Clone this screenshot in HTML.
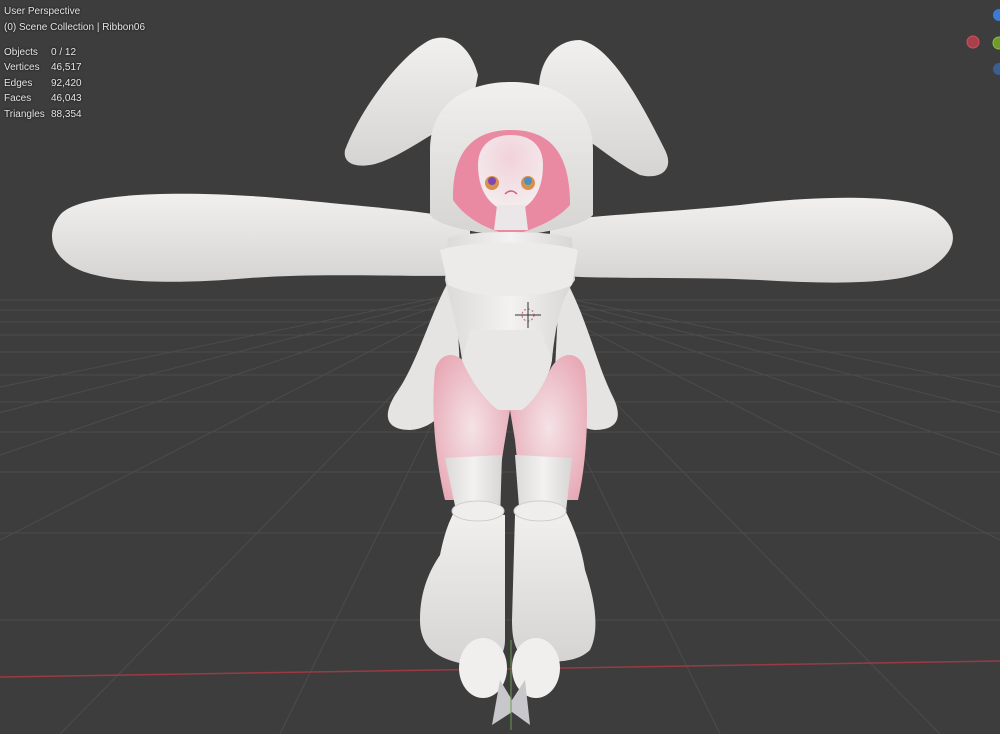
<!DOCTYPE html>
<html><head><meta charset="utf-8"><style>
html,body{margin:0;padding:0;background:#3d3d3d;width:1000px;height:734px;overflow:hidden}
.t{position:absolute;left:4px;color:#e6e6e6;font:10px "Liberation Sans",sans-serif;white-space:pre;text-shadow:0 0 2px #000}
</style></head><body>
<svg width="1000" height="734" style="position:absolute;left:0;top:0">
<defs>
<linearGradient id="w" x1="0" y1="0" x2="0" y2="1"><stop offset="0" stop-color="#f1f0ee"/><stop offset="1" stop-color="#d6d4d2"/></linearGradient>
<linearGradient id="wh" x1="0" y1="0" x2="1" y2="0"><stop offset="0" stop-color="#dcdad8"/><stop offset=".5" stop-color="#f3f2f1"/><stop offset="1" stop-color="#d8d6d4"/></linearGradient>
<radialGradient id="pk" cx=".5" cy=".5" r=".6"><stop offset="0" stop-color="#f4e3e6"/><stop offset="1" stop-color="#e8a9b6"/></radialGradient>
<radialGradient id="fc" cx=".5" cy=".3" r=".7"><stop offset="0" stop-color="#f2d2da"/><stop offset="1" stop-color="#f3eef0"/></radialGradient>
</defs>
<rect width="1000" height="734" fill="#3d3d3d"/>
<g stroke="#4c4c4c" stroke-width="1">
<line x1="0" y1="300" x2="1000" y2="300"/><line x1="0" y1="310" x2="1000" y2="310"/>
<line x1="0" y1="322" x2="1000" y2="322"/><line x1="0" y1="335" x2="1000" y2="335"/>
<line x1="0" y1="352" x2="1000" y2="352"/><line x1="0" y1="375" x2="1000" y2="375"/>
<line x1="0" y1="402" x2="1000" y2="402"/><line x1="0" y1="432" x2="1000" y2="432"/>
<line x1="0" y1="472" x2="1000" y2="472"/><line x1="0" y1="533" x2="1000" y2="533"/>
<line x1="0" y1="620" x2="1000" y2="620"/>
<line x1="500" y1="285" x2="-1260" y2="734"/><line x1="500" y1="285" x2="-820" y2="734"/>
<line x1="500" y1="285" x2="-380" y2="734"/><line x1="500" y1="285" x2="60" y2="734"/>
<line x1="500" y1="285" x2="280" y2="734"/><line x1="500" y1="285" x2="720" y2="734"/>
<line x1="500" y1="285" x2="940" y2="734"/><line x1="500" y1="285" x2="1380" y2="734"/>
<line x1="500" y1="285" x2="1820" y2="734"/><line x1="500" y1="285" x2="2260" y2="734"/>
<line x1="500" y1="285" x2="-1700" y2="734"/><line x1="500" y1="285" x2="2700" y2="734"/>
</g>
<line x1="0" y1="677" x2="1000" y2="661" stroke="#9a3a44" stroke-width="1.5"/>
<path d="M345 150 C360 110 400 55 430 40 C450 32 470 45 478 75 L470 115 C440 125 400 160 370 165 C350 168 343 160 345 150Z" fill="url(#w)"/>
<path d="M540 100 C535 70 550 40 580 40 C610 45 640 100 665 150 C675 170 660 180 640 175 C610 160 580 130 550 118 Z" fill="url(#w)"/>
<path d="M60 215 C80 190 200 190 300 200 C380 208 440 212 470 222 L470 275 C420 278 330 272 250 278 C180 284 100 285 70 265 C48 250 48 230 60 215 Z" fill="url(#w)"/>
<path d="M940 215 C920 193 820 195 740 205 C660 213 590 215 550 222 L550 275 C600 280 680 276 760 280 C830 284 910 286 935 265 C958 248 958 230 940 215 Z" fill="url(#w)"/>
<path d="M455 270 C430 310 420 360 395 395 C380 420 390 430 410 430 C440 428 455 400 460 370 Z" fill="#e6e4e2"/>
<path d="M560 270 C585 310 595 360 612 395 C625 420 615 430 595 430 C570 428 560 400 555 370 Z" fill="#e6e4e2"/>
<path d="M430 150 C430 105 465 82 511 82 C557 82 593 105 593 150 L593 215 C580 228 540 232 510 238 C480 232 440 228 430 215 Z" fill="url(#w)"/>
<path d="M453 200 C452 155 470 130 511 130 C552 130 570 155 570 205 C555 222 530 230 511 236 C492 230 468 222 453 200 Z" fill="#e98aa2"/>
<path d="M478 165 C478 145 492 135 511 135 C530 135 543 145 543 165 C543 195 528 210 511 212 C494 210 478 195 478 165 Z" fill="url(#fc)"/>
<path d="M497 205 L525 205 L528 230 L494 230 Z" fill="#ebe7e8"/>
<circle cx="492" cy="183" r="7" fill="#d8904c"/><circle cx="528" cy="183" r="7" fill="#d8904c"/>
<circle cx="492" cy="181" r="4" fill="#7a4ab0"/><circle cx="528" cy="181" r="4" fill="#4a90c0"/>
<path d="M505 194 Q511 188 517 194" stroke="#d06070" fill="none" stroke-width="1.5"/>
<path d="M448 238 C470 230 550 230 572 238 L575 280 C560 300 555 330 552 360 C548 385 530 405 515 410 L505 410 C490 405 466 385 462 360 C458 330 450 300 445 280 Z" fill="url(#wh)"/>
<path d="M440 250 C470 240 550 240 578 250 L572 285 C540 300 480 300 448 285 Z" fill="#ecebea"/>
<path d="M435 370 C440 350 460 350 470 370 L490 400 L510 410 L505 440 C500 470 500 480 495 500 L445 500 C438 470 430 420 435 370 Z" fill="url(#pk)"/>
<path d="M585 370 C580 350 560 350 550 370 L530 400 L510 410 L515 440 C518 470 520 480 520 500 L578 500 C585 470 590 420 585 370 Z" fill="url(#pk)"/>
<path d="M462 360 C470 380 485 400 498 410 L522 410 C535 400 548 380 552 360 L540 330 L470 330 Z" fill="#e8e7e6"/>
<path d="M445 458 L502 455 L500 520 L458 520 Z" fill="url(#wh)"/>
<path d="M515 455 L572 458 L565 520 L520 520 Z" fill="url(#wh)"/>
<path d="M455 510 L505 515 L505 640 C505 660 490 670 470 665 C440 660 420 650 420 620 C420 590 430 570 440 555 C445 530 450 520 455 510 Z" fill="url(#w)"/>
<path d="M515 515 L565 510 C575 530 582 550 585 570 C595 600 600 630 590 650 C575 665 545 662 525 660 C515 650 512 640 512 620 Z" fill="url(#w)"/>
<ellipse cx="478" cy="511" rx="26" ry="10" fill="#efeeec" stroke="#d0cecc"/>
<ellipse cx="540" cy="511" rx="26" ry="10" fill="#efeeec" stroke="#d0cecc"/>
<ellipse cx="483" cy="668" rx="24" ry="30" fill="#f0efee"/>
<ellipse cx="536" cy="668" rx="24" ry="30" fill="#f0efee"/>
<path d="M500 680 L512 700 L525 680 L530 725 L512 712 L492 725 Z" fill="#c8c8cc"/>
<line x1="511" y1="640" x2="511" y2="730" stroke="#6a9a4a"/>
<circle cx="528" cy="315" r="6" fill="none" stroke="#c46070" stroke-dasharray="2 2"/>
<path d="M515 315 H541 M528 302 V328" stroke="#333" stroke-width="1"/>
<circle cx="973" cy="42" r="6" fill="#a8404c" stroke="#d05060"/>
<circle cx="999" cy="15" r="6" fill="#3b7bd8"/>
<circle cx="999" cy="43" r="6" fill="#6e9b2a" stroke="#8cc040"/>
<circle cx="999" cy="69" r="6" fill="#3a5f90"/>
</svg>
<div class="t" style="top:6px">User Perspective</div>
<div class="t" style="top:22px">(0) Scene Collection | Ribbon06</div>
<div class="t" style="top:47px">Objects</div><div class="t" style="top:47px;left:51px">0 / 12</div>
<div class="t" style="top:62px">Vertices</div><div class="t" style="top:62px;left:51px">46,517</div>
<div class="t" style="top:78px">Edges</div><div class="t" style="top:78px;left:51px">92,420</div>
<div class="t" style="top:93px">Faces</div><div class="t" style="top:93px;left:51px">46,043</div>
<div class="t" style="top:109px">Triangles</div><div class="t" style="top:109px;left:51px">88,354</div>
</body></html>
